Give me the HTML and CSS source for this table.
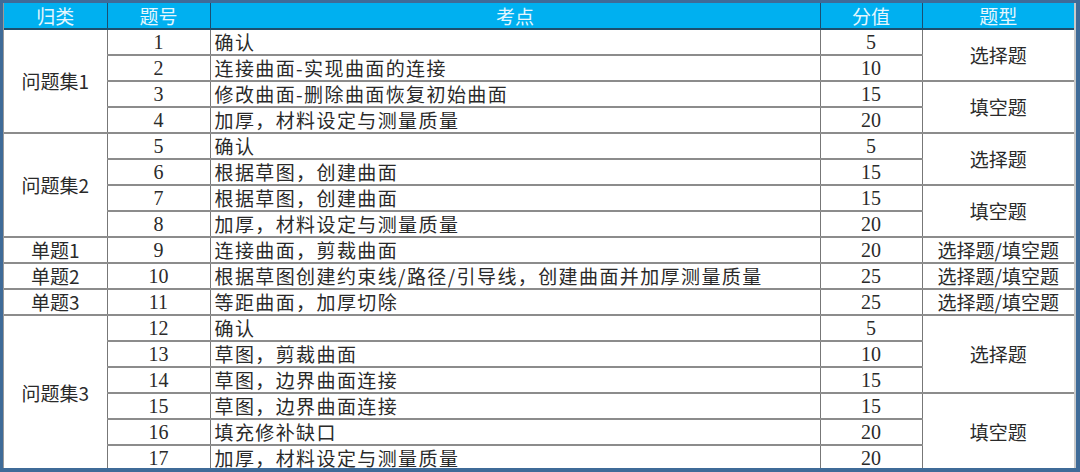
FILE: index.html
```html
<!DOCTYPE html>
<html lang="zh">
<head>
<meta charset="utf-8">
<link rel="stylesheet" href="styles.css">
</head>
<body>
<div class="frame">
  <div class="sheet">
    <table class="grid">
      <colgroup>
        <col class="c-cat"><col class="c-no"><col class="c-topic"><col class="c-score"><col class="c-type">
      </colgroup>
      <thead>
        <tr><th>归类</th><th>题号</th><th>考点</th><th>分值</th><th>题型</th></tr>
      </thead>
      <tbody>
        <tr class="grp"><td rowspan="4" class="cat">问题集1</td><td class="num">1</td><td class="topic">确认</td><td class="num">5</td><td rowspan="2" class="type">选择题</td></tr>
        <tr><td class="num">2</td><td class="topic">连接曲面-实现曲面的连接</td><td class="num">10</td></tr>
        <tr><td class="num">3</td><td class="topic">修改曲面-删除曲面恢复初始曲面</td><td class="num">15</td><td rowspan="2" class="type">填空题</td></tr>
        <tr><td class="num">4</td><td class="topic">加厚，材料设定与测量质量</td><td class="num">20</td></tr>
        <tr class="grp"><td rowspan="4" class="cat">问题集2</td><td class="num">5</td><td class="topic">确认</td><td class="num">5</td><td rowspan="2" class="type">选择题</td></tr>
        <tr><td class="num">6</td><td class="topic">根据草图，创建曲面</td><td class="num">15</td></tr>
        <tr><td class="num">7</td><td class="topic">根据草图，创建曲面</td><td class="num">15</td><td rowspan="2" class="type">填空题</td></tr>
        <tr><td class="num">8</td><td class="topic">加厚，材料设定与测量质量</td><td class="num">20</td></tr>
        <tr class="grp"><td class="cat">单题1</td><td class="num">9</td><td class="topic">连接曲面，剪裁曲面</td><td class="num">20</td><td class="type">选择题/填空题</td></tr>
        <tr class="grp"><td class="cat">单题2</td><td class="num">10</td><td class="topic">根据草图创建约束线/路径/引导线，创建曲面并加厚测量质量</td><td class="num">25</td><td class="type">选择题/填空题</td></tr>
        <tr class="grp"><td class="cat">单题3</td><td class="num">11</td><td class="topic">等距曲面，加厚切除</td><td class="num">25</td><td class="type">选择题/填空题</td></tr>
        <tr class="grp"><td rowspan="6" class="cat">问题集3</td><td class="num">12</td><td class="topic">确认</td><td class="num">5</td><td rowspan="3" class="type">选择题</td></tr>
        <tr><td class="num">13</td><td class="topic">草图，剪裁曲面</td><td class="num">10</td></tr>
        <tr><td class="num">14</td><td class="topic">草图，边界曲面连接</td><td class="num">15</td></tr>
        <tr><td class="num">15</td><td class="topic">草图，边界曲面连接</td><td class="num">15</td><td rowspan="3" class="type">填空题</td></tr>
        <tr><td class="num">16</td><td class="topic">填充修补缺口</td><td class="num">20</td></tr>
        <tr><td class="num">17</td><td class="topic">加厚，材料设定与测量质量</td><td class="num">20</td></tr>
      </tbody>
    </table>
  </div>
</div>
</body>
</html>
```

FILE: styles.css
```css
html, body {
  margin: 0;
  padding: 0;
  background: #3f6b98;
}
.frame {
  width: 1080px;
  height: 472px;
  box-sizing: border-box;
  padding: 3px 4px 4px 3px;
  background: #3f6b98;
}
.sheet {
  height: 100%;
  background: #ffffff;
  border-left: 1px solid #9a9a9a;
  border-right: 2px solid #c9c9c9;
  overflow: hidden;
}
.grid {
  width: 100%;
  border-collapse: collapse;
  table-layout: fixed;
  font-family: "Liberation Serif", "Noto Sans CJK SC", serif;
  font-size: 20px;
  color: #2a2a2a;
}
.c-cat { width: 103px; }
.c-no { width: 103px; }
.c-topic { width: 610px; }
.c-score { width: 102px; }
.c-type { width: auto; }
.grid th {
  height: 25px;
  padding: 0;
  background: #00b0f0;
  color: #e4f6fd;
  font-family: "Noto Sans CJK SC", sans-serif;
  font-weight: 400;
  font-size: 19px;
  line-height: 24px;
  border-left: 1px solid #1b4f72;
  border-bottom: 2px solid #1d4f6e;
}
.grid th:first-child { border-left: none; }
.grid td {
  height: 24px;
  padding: 0;
  line-height: 24px;
  border: 1px solid #777777;
  border-bottom: 2px solid #8c8c8c;
  white-space: nowrap;
  overflow: hidden;
}
.grid tr.grp td { border-top: 2px solid #6a6a6a; }
.grid td:first-child { border-left: none; }
.grid td.cat {
  text-align: center;
  font-family: "Noto Sans CJK SC", sans-serif;
  font-size: 19px;
}
.grid td.num {
  text-align: center;
}
.grid td.topic {
  text-align: left;
  padding-left: 4px;
  font-family: "Noto Sans CJK SC", sans-serif;
  font-size: 19px;
  letter-spacing: 1.4px;
}
.grid td.type {
  text-align: center;
  font-family: "Noto Sans CJK SC", sans-serif;
  font-size: 19px;
  border-right: none;
}
```
